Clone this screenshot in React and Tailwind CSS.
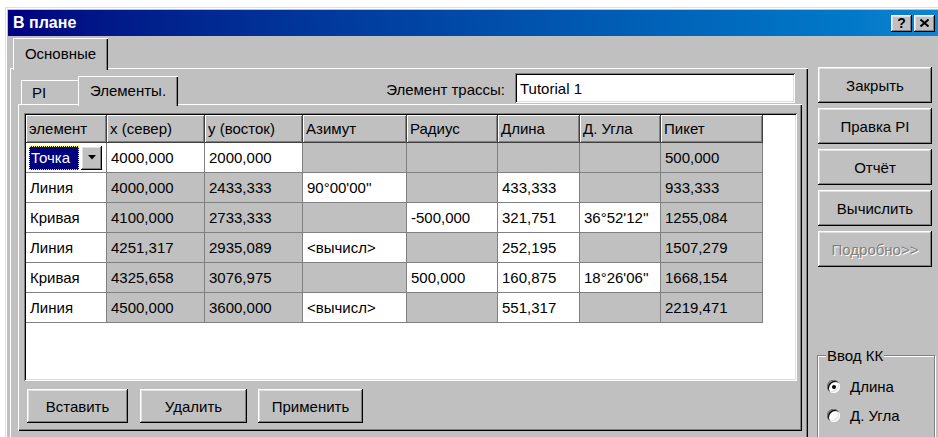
import React from "react";

// classic 3D bevels
const raised =
  "shadow-[inset_-1px_-1px_#000,inset_1px_1px_#fff,inset_-2px_-2px_#808080,inset_2px_2px_#dfdfdf]";
const sunken =
  "shadow-[inset_1px_1px_#808080,inset_-1px_-1px_#fff,inset_2px_2px_#000,inset_-2px_-2px_#dfdfdf]";
const tabEdge = "shadow-[inset_1px_1px_#fff,inset_-1px_0_#000,inset_-2px_0_#808080]";
const panelEdge = "shadow-[inset_1px_1px_#fff,inset_-1px_-1px_#000,inset_-2px_-2px_#808080]";

const columns = [
  { title: "элемент", w: "w-[81px]" },
  { title: "x (север)", w: "w-[98px]" },
  { title: "y (восток)", w: "w-[98px]" },
  { title: "Азимут", w: "w-[104px]" },
  { title: "Радиус", w: "w-[91px]" },
  { title: "Длина", w: "w-[82px]" },
  { title: "Д. Угла", w: "w-[81px]" },
  { title: "Пикет", w: "w-[102px]" },
];

// [text, editable]
const rows = [
  [null, ["4000,000", 1], ["2000,000", 1], ["", 0], ["", 0], ["", 0], ["", 0], ["500,000", 0]],
  [["Линия", 1], ["4000,000", 0], ["2433,333", 0], ["90°00'00''", 1], ["", 0], ["433,333", 1], ["", 0], ["933,333", 0]],
  [["Кривая", 1], ["4100,000", 0], ["2733,333", 0], ["", 0], ["-500,000", 1], ["321,751", 1], ["36°52'12''", 1], ["1255,084", 0]],
  [["Линия", 1], ["4251,317", 0], ["2935,089", 0], ["<вычисл>", 1], ["", 0], ["252,195", 1], ["", 0], ["1507,279", 0]],
  [["Кривая", 1], ["4325,658", 0], ["3076,975", 0], ["", 0], ["500,000", 1], ["160,875", 1], ["18°26'06''", 1], ["1668,154", 0]],
  [["Линия", 1], ["4500,000", 0], ["3600,000", 0], ["<вычисл>", 1], ["", 0], ["551,317", 1], ["", 0], ["2219,471", 0]],
];

function Button({ children, className = "", disabled }) {
  return (
    <div
      className={`flex items-center justify-center bg-[#c0c0c0] ${raised} ${className} ${
        disabled ? "text-[#808080] [text-shadow:1px_1px_0_#fff]" : ""
      }`}
    >
      {children}
    </div>
  );
}

function ElementCombo() {
  return (
    <div className="flex items-center h-[30px] pl-[3px] border-r border-b border-[#808080] bg-white w-[81px]">
      <div className="w-[50px] h-[24px] bg-[#000080] text-white flex items-center pl-[2px] outline-1 outline-dotted outline-[#ffff00] -outline-offset-1">
        Точка
      </div>
      <div className={`ml-[2px] w-[21px] h-[24px] bg-[#c0c0c0] flex items-center justify-center ${raised}`}>
        <svg width="8" height="5" viewBox="0 0 8 5">
          <polygon points="0,0 8,0 4,4.5" fill="#000" />
        </svg>
      </div>
    </div>
  );
}

function Radio({ checked, label }) {
  return (
    <div className="flex items-center h-[29px]">
      <div className="relative w-[13px] h-[13px] rounded-full bg-white shadow-[inset_1px_1px_#808080,inset_2px_2px_#000,inset_-1px_-1px_#fff,inset_-2px_-2px_#dfdfdf]">
        {checked && <div className="absolute left-[4.5px] top-[4.5px] w-[4px] h-[4px] rounded-full bg-black" />}
      </div>
      <span className="ml-[10px]">{label}</span>
    </div>
  );
}

export default function App() {
  return (
    <div className="w-[938px] h-[437px] overflow-hidden bg-white pt-[7px] pl-[5px] font-['Liberation_Sans',Arial,sans-serif] text-[15px] leading-none text-black">
      <div className="w-[960px] h-[460px] bg-[#c0c0c0] pt-[3px] pl-[3px] shadow-[inset_1px_1px_#dfdfdf,inset_2px_2px_#fff]">
        {/* title bar */}
        <div className="w-[932px] h-[26px] flex items-center pl-[5px] pr-[5px] bg-gradient-to-r from-[#000080] to-[#1084d0]">
          <span className="text-white font-bold text-[16px]">В плане</span>
          <div className="ml-auto flex gap-[2px]">
            <div className={`w-[21px] h-[17px] bg-[#c0c0c0] flex items-center justify-center font-bold text-[14px] ${raised}`}>
              ?
            </div>
            <div className={`w-[21px] h-[17px] bg-[#c0c0c0] flex items-center justify-center ${raised}`}>
              <svg width="9" height="8" viewBox="0 0 9 8">
                <path d="M0.5 0.5 L8.5 7.5 M8.5 0.5 L0.5 7.5" stroke="#000" strokeWidth="2" />
              </svg>
            </div>
          </div>
        </div>

        <div className="flex pl-[2px] pt-[2px]">
          {/* left: tab control */}
          <div className="w-[798px]">
            <div className="h-[30px] pl-[3px] flex items-start">
              <div className={`relative z-10 w-[95px] h-[32px] pb-[2px] bg-[#c0c0c0] flex items-center justify-center ${tabEdge}`}>
                Основные
              </div>
            </div>
            <div className={`h-[372px] pt-[5px] pl-[8px] pr-[6px] bg-[#c0c0c0] ${panelEdge}`}>
              <div className="flex h-[31px]">
                <div className="flex items-end pl-[3px]">
                  <div className={`w-[59px] h-[24px] bg-[#c0c0c0] flex items-center pl-[11px] ${tabEdge}`}>PI</div>
                  <div className={`relative z-10 -ml-[2px] -mb-[2px] w-[100px] h-[30px] pb-[2px] bg-[#c0c0c0] flex items-center justify-center ${tabEdge}`}>
                    Элементы.
                  </div>
                </div>
                <div className="ml-auto flex items-start mr-[7px]">
                  <span className="h-[30px] flex items-center pt-[3px]">Элемент трассы:</span>
                  <div className={`ml-[10px] w-[280px] h-[30px] bg-white flex items-center pl-[5px] ${sunken}`}>
                    Tutorial 1
                  </div>
                </div>
              </div>

              <div className={`h-[327px] pt-[9px] pl-[6px] bg-[#c0c0c0] ${panelEdge}`}>
                {/* grid */}
                <div className={`w-[773px] h-[268px] bg-white p-[2px] ${sunken}`}>
                  <div className="flex">
                    {columns.map((c) => (
                      <div
                        key={c.title}
                        className={`${c.w} h-[28px] flex items-center pl-[3px] bg-[#c0c0c0] border-r border-b border-[#404040] shadow-[inset_1px_1px_#fff,inset_-1px_-1px_#808080] whitespace-nowrap`}
                      >
                        {c.title}
                      </div>
                    ))}
                  </div>
                  {rows.map((row, r) => (
                    <div key={r} className="flex">
                      {row.map((cell, i) =>
                        cell === null ? (
                          <ElementCombo key={i} />
                        ) : (
                          <div
                            key={i}
                            className={`${columns[i].w} h-[30px] flex items-center pl-[4px] border-r border-b border-[#808080] whitespace-nowrap ${
                              cell[1] ? "bg-white" : "bg-[#c0c0c0]"
                            }`}
                          >
                            {cell[0]}
                          </div>
                        )
                      )}
                    </div>
                  ))}
                </div>

                <div className="flex mt-[8px] ml-[3px]">
                  <Button className="w-[101px] h-[34px]">Вставить</Button>
                  <Button className="ml-[12px] w-[107px] h-[34px]">Удалить</Button>
                  <Button className="ml-[11px] w-[105px] h-[34px]">Применить</Button>
                </div>
              </div>
            </div>
          </div>

          {/* right: command buttons */}
          <div className="ml-[10px] mt-[29px] w-[114px] flex flex-col">
            <div className="flex flex-col gap-[5px]">
              <Button className="h-[36px]">Закрыть</Button>
              <Button className="h-[36px]">Правка PI</Button>
              <Button className="h-[36px]">Отчёт</Button>
              <Button className="h-[36px]">Вычислить</Button>
              <Button className="h-[36px]" disabled>
                Подробно&gt;&gt;
              </Button>
            </div>
            <div className="relative mt-[88px] -ml-[1px] w-[118px] h-[90px] border border-[#808080] shadow-[inset_1px_1px_#fff,1px_1px_#fff] pt-[16px] pl-[9px]">
              <span className="absolute -top-[8px] left-[8px] px-[1px] bg-[#c0c0c0]">Ввод КК</span>
              <Radio checked label="Длина" />
              <Radio label="Д. Угла" />
            </div>
          </div>
        </div>
      </div>
    </div>
  );
}
